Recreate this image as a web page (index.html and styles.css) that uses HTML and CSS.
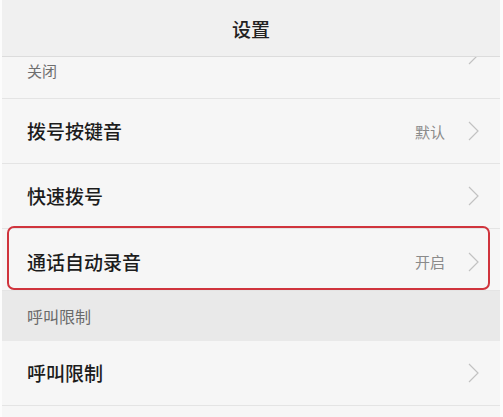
FILE: index.html
```html
<!DOCTYPE html>
<html lang="zh">
<head>
<meta charset="utf-8">
<title>设置</title>
<link rel="stylesheet" href="styles.css">
</head>
<body>
<div class="app">
  <header class="topbar">设置</header>
  <div class="list">
    <div class="row row-tall row-scrolled">
      <div class="texts">
        <div class="sub">关闭</div>
      </div>
      <svg class="chev" viewBox="0 0 11 20"><path d="M1 1 L10 10 L1 19"/></svg>
    </div>
    <div class="row">
      <div class="title">拨号按键音</div>
      <span class="value">默认</span>
      <svg class="chev" viewBox="0 0 11 20"><path d="M1 1 L10 10 L1 19"/></svg>
    </div>
    <div class="row">
      <div class="title">快速拨号</div>
      <svg class="chev" viewBox="0 0 11 20"><path d="M1 1 L10 10 L1 19"/></svg>
    </div>
    <div class="row row-marked">
      <div class="title">通话自动录音</div>
      <span class="value">开启</span>
      <svg class="chev" viewBox="0 0 11 20"><path d="M1 1 L10 10 L1 19"/></svg>
    </div>
    <div class="section">呼叫限制</div>
    <div class="row">
      <div class="title">呼叫限制</div>
      <svg class="chev" viewBox="0 0 11 20"><path d="M1 1 L10 10 L1 19"/></svg>
    </div>
    <div class="row"></div>
  </div>
</div>
</body>
</html>
```
FILE: styles.css
```css
html, body {
  margin: 0;
  padding: 0;
  background: #fcfcfc;
  height: 100%;
  overflow: hidden;
}
body {
  font-family: "Noto Sans CJK SC", "Noto Sans", sans-serif;
}
.app {
  margin: 0 3px 0 2px;
  display: flex;
  flex-direction: column;
  height: 100%;
}
.topbar {
  height: 56px;
  background: #f0f0f0;
  border-bottom: 1px solid #dcdcdc;
  display: flex;
  align-items: center;
  justify-content: center;
  font-size: 19px;
  font-weight: 500;
  color: #222;
  flex: none;
}
.list {
  flex: 1;
  overflow: hidden;
  background: #f6f6f6;
}
.row {
  position: relative;
  height: 65px;
  box-sizing: border-box;
  border-bottom: 1px solid #e4e4e4;
  display: flex;
  align-items: center;
  padding: 0 21px 0 25px;
  background: #f6f6f6;
}
.row-tall {
  height: 87px;
}
.row-scrolled {
  margin-top: -45px;
}
.texts {
  flex: 1;
  display: flex;
  flex-direction: column;
  padding-top: 32px;
}
.title {
  flex: 1;
  font-size: 19px;
  font-weight: 500;
  color: #1c1c1c;
  line-height: 26px;
}
.row .sub {
  font-size: 15px;
  color: #6f6f6f;
  line-height: 20px;
}
.value {
  font-size: 15px;
  color: #8a8a8a;
  margin-right: 23px;
}
.chev {
  width: 11px;
  height: 20px;
  flex: none;
}
.chev path {
  fill: none;
  stroke: #c2c2c2;
  stroke-width: 1.2;
}
.row-marked {
  height: 62px;
  padding-top: 4px;
}
.row-marked::after {
  content: "";
  position: absolute;
  left: 5px;
  right: 10px;
  top: -3px;
  bottom: 0;
  border: 2px solid #d0343d;
  border-radius: 7px;
}
.section {
  height: 50px;
  background: #e9e9e9;
  display: flex;
  align-items: center;
  padding-left: 25px;
  font-size: 16px;
  color: #6a6a6a;
}
```
